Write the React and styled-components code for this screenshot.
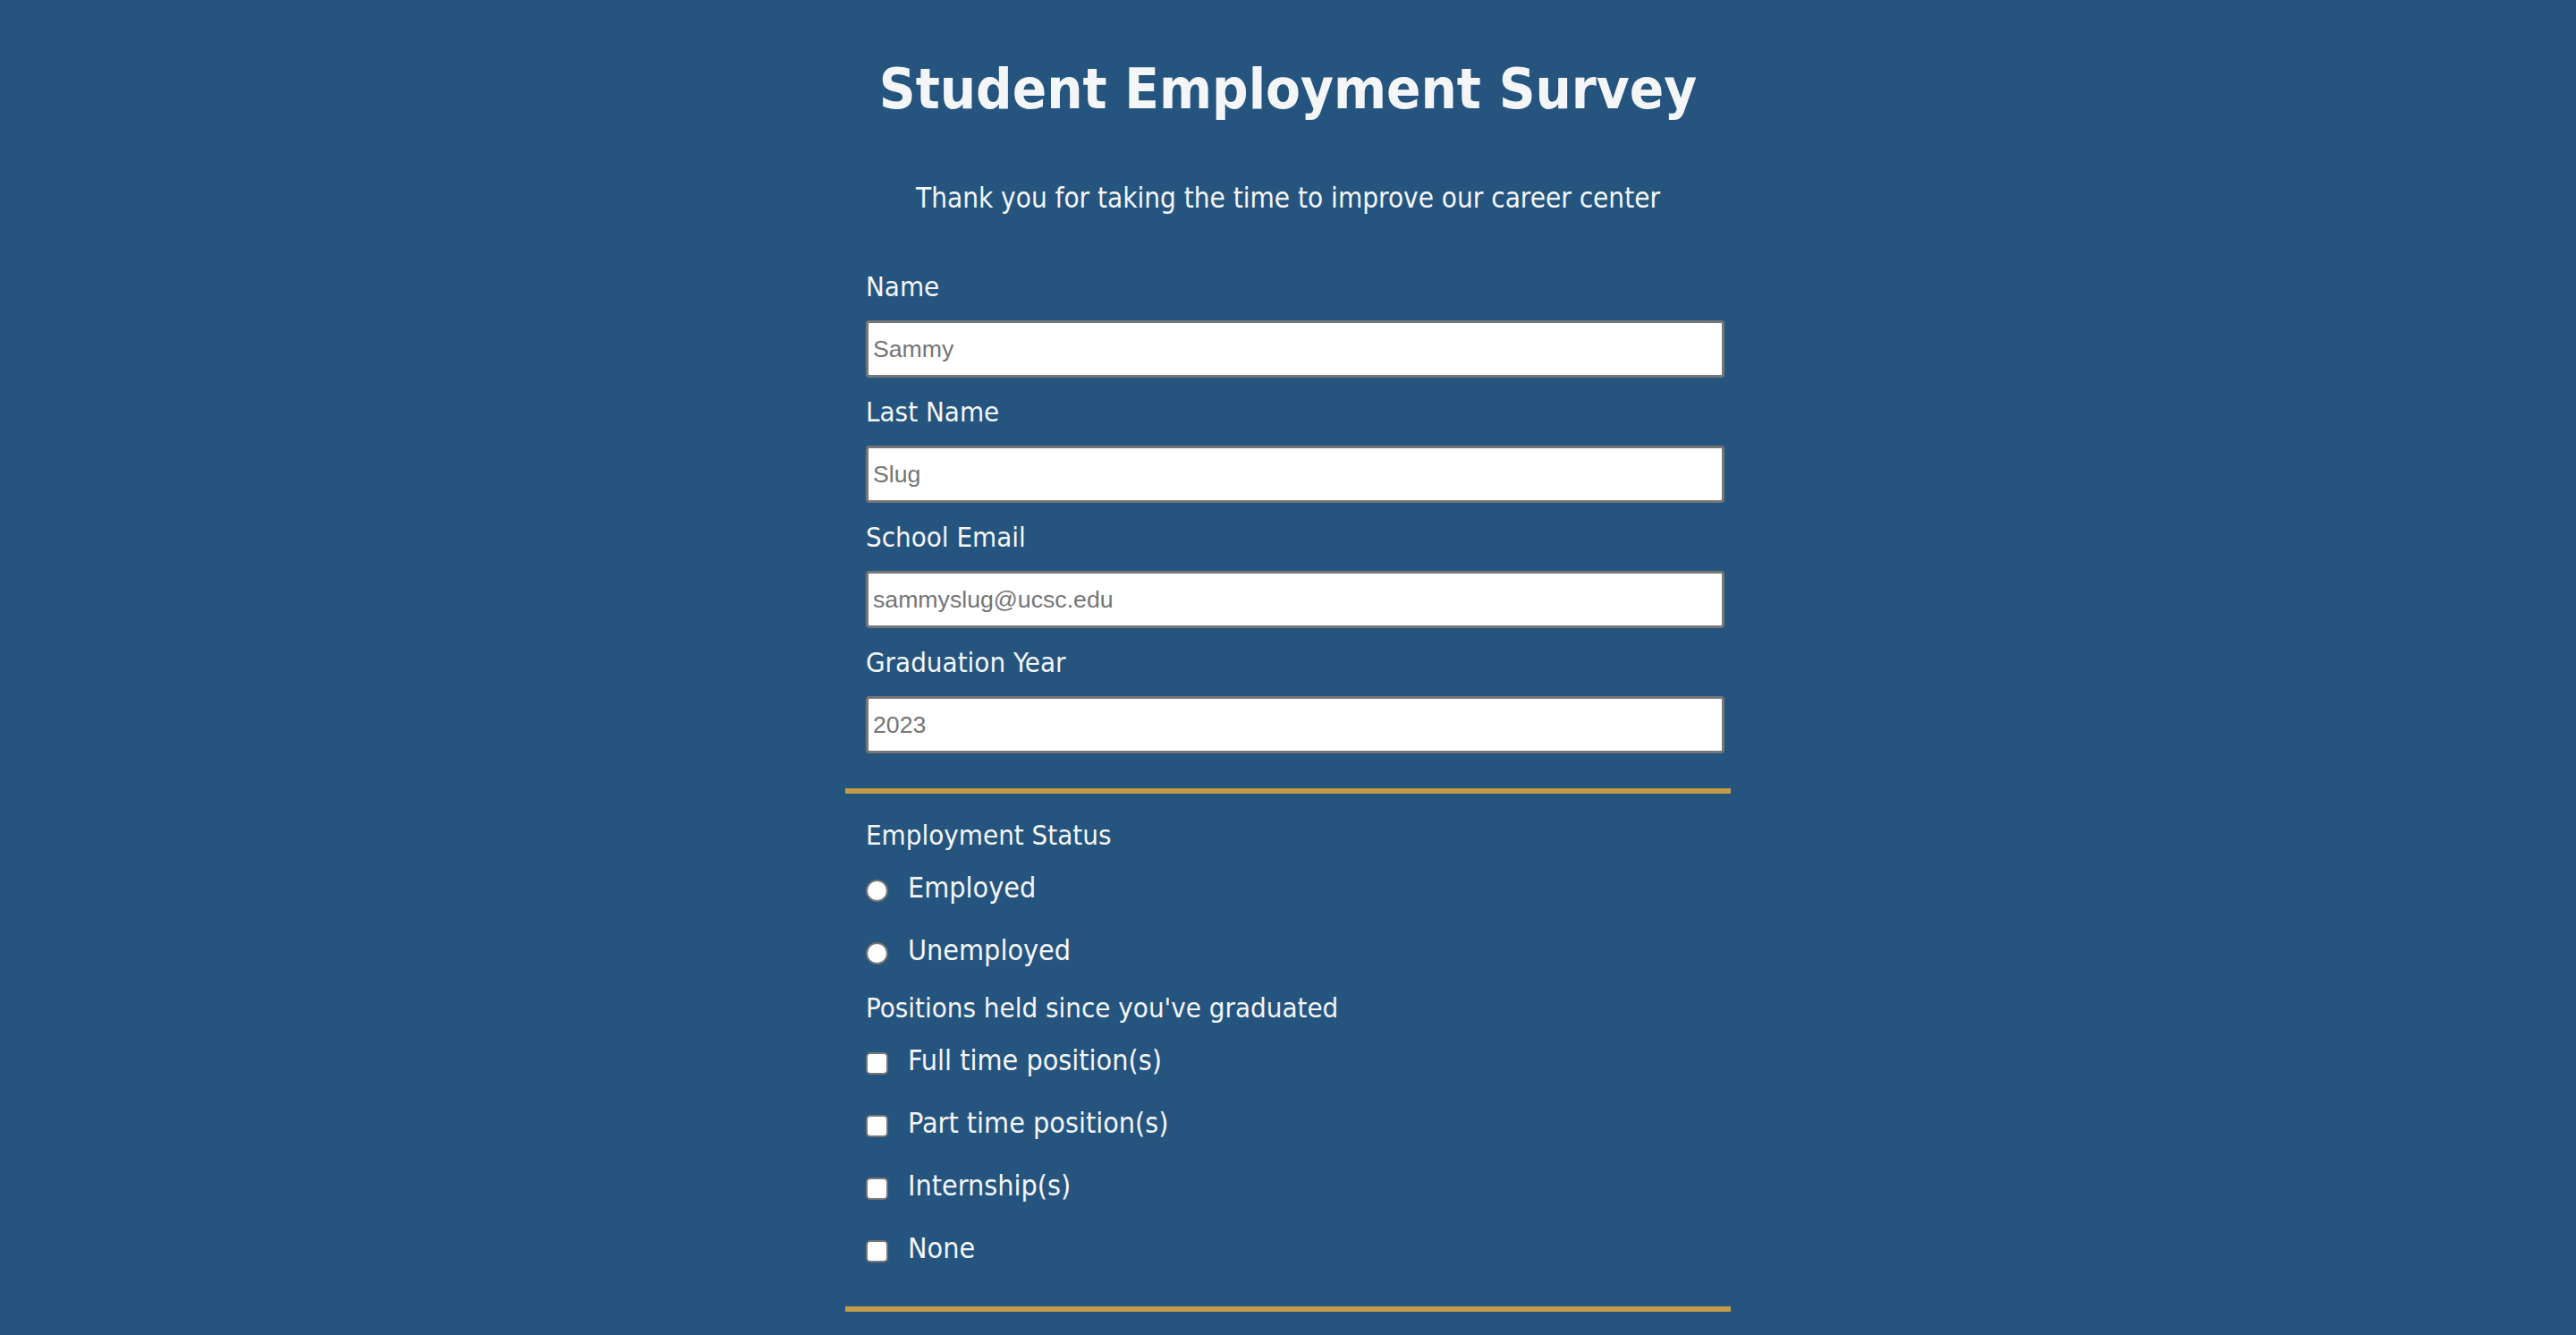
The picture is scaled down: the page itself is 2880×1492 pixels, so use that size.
import React from "react";
import styled, { createGlobalStyle } from "styled-components";

const GlobalStyle = createGlobalStyle`
  html, body {
    margin: 0;
    padding: 0;
    background: #25557f;
  }
  body {
    font-family: "DejaVu Sans Condensed", "DejaVu Sans", Verdana, sans-serif;
    color: #f4f5f7;
  }
`;

const Page = styled.div`
  min-height: 1492px;
  padding-top: 60px;
  box-sizing: border-box;
`;

const Survey = styled.form`
  width: 990px;
  margin: 0 auto;
  display: flex;
  flex-direction: column;
`;

const Title = styled.h1`
  margin: 0;
  font-size: 63px;
  line-height: 80px;
  font-weight: bold;
  text-align: center;
`;

const Subtitle = styled.p`
  margin: 61px 0 0;
  font-size: 31.2px;
  line-height: 40px;
  text-align: center;
`;

const Section = styled.div`
  display: flex;
  flex-direction: column;
  padding-left: 23px;
  margin-top: ${({ top }) => top}px;
  gap: ${({ gap }) => gap}px;
`;

const Field = styled.div`
  display: flex;
  flex-direction: column;
  gap: 18px;
`;

const Label = styled.label`
  display: block;
  font-size: 31px;
  line-height: 40px;
  margin-top: ${({ top }) => top || 0}px;
`;

const TextInput = styled.input`
  box-sizing: border-box;
  width: 960px;
  height: 64px;
  margin: 0;
  padding: 0 5px;
  border: 3px solid #767676;
  border-radius: 4px;
  background: #fff;
  font-family: "Liberation Sans", Arial, sans-serif;
  font-size: 26.67px;
  color: #222;
  &::placeholder {
    color: #757575;
  }
`;

const Divider = styled.hr`
  width: 990px;
  height: 6px;
  margin: ${({ top }) => top}px 0 0;
  border: none;
  background: #c39b49;
`;

const Group = styled.div`
  display: flex;
  flex-direction: column;
  gap: 30px;
  margin-top: ${({ top }) => top}px;
`;

const Option = styled.label`
  display: flex;
  align-items: center;
  height: 40px;
  gap: 22px;
  font-size: 32px;
  line-height: 40px;
`;

const Radio = styled.input.attrs({ type: "radio" })`
  appearance: none;
  box-sizing: border-box;
  width: 25px;
  height: 25px;
  margin: 6px 0 0;
  border: 2px solid #767676;
  border-radius: 50%;
  background: #fff;
`;

const Checkbox = styled.input.attrs({ type: "checkbox" })`
  appearance: none;
  box-sizing: border-box;
  width: 25px;
  height: 25px;
  margin: 6px 0 0;
  border: 2px solid #767676;
  border-radius: 5px;
  background: #fff;
`;

const fields = [
  { id: "name", label: "Name", placeholder: "Sammy" },
  { id: "last", label: "Last Name", placeholder: "Slug" },
  { id: "email", label: "School Email", placeholder: "sammyslug@ucsc.edu" },
  { id: "year", label: "Graduation Year", placeholder: "2023" },
];

const positions = [
  "Full time position(s)",
  "Part time position(s)",
  "Internship(s)",
  "None",
];

export default function App() {
  return (
    <Page>
      <GlobalStyle />
      <Survey onSubmit={(e) => e.preventDefault()}>
        <Title>Student Employment Survey</Title>
        <Subtitle>Thank you for taking the time to improve our career center</Subtitle>

        <Section top={59} gap={18}>
          {fields.map((f) => (
            <Field key={f.id}>
              <Label htmlFor={f.id}>{f.label}</Label>
              <TextInput id={f.id} placeholder={f.placeholder} />
            </Field>
          ))}
        </Section>

        <Divider top={39} />

        <Section top={26} gap={0}>
          <Label>Employment Status</Label>
          <Group top={19}>
            <Option>
              <Radio name="status" value="employed" />
              Employed
            </Option>
            <Option>
              <Radio name="status" value="unemployed" />
              Unemployed
            </Option>
          </Group>

          <Label top={24}>Positions held since you've graduated</Label>
          <Group top={19}>
            {positions.map((p) => (
              <Option key={p}>
                <Checkbox name="positions" value={p} />
                {p}
              </Option>
            ))}
          </Group>
        </Section>

        <Divider top={45} />
      </Survey>
    </Page>
  );
}
